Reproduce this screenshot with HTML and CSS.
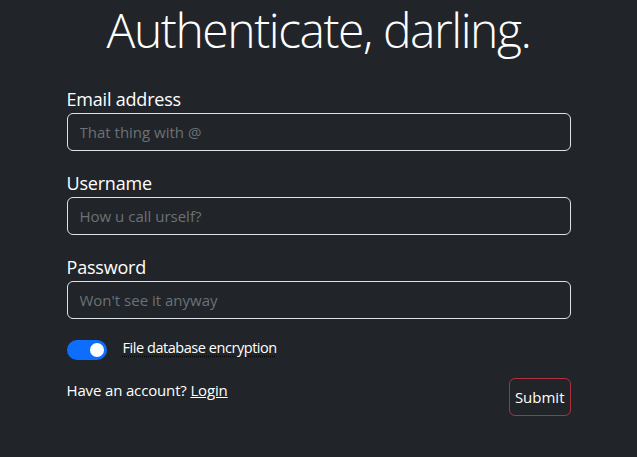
FILE: index.html
```html
<!DOCTYPE html>
<html lang="en">
<head>
<meta charset="utf-8">
<title>Authenticate</title>
<link rel="stylesheet" href="styles.css">
</head>
<body>
<main class="container">
  <h1 class="title">Authenticate, darling.</h1>
  <form class="form">
    <div class="group">
      <label class="label" for="email">Email address</label>
      <input class="input" id="email" type="email" placeholder="That thing with @">
    </div>
    <div class="group">
      <label class="label" for="user">Username</label>
      <input class="input" id="user" type="text" placeholder="How u call urself?">
    </div>
    <div class="group">
      <label class="label" for="pass">Password</label>
      <input class="input" id="pass" type="password" placeholder="Won't see it anyway">
    </div>
    <div class="switch-row">
      <span class="switch"><span class="knob"></span></span>
      <span class="switch-label">File database encryption</span>
    </div>
    <div class="bottom-row">
      <p class="account">Have an account? <a class="login" href="#">Login</a></p>
      <button class="submit" type="button">Submit</button>
    </div>
  </form>
</main>
</body>
</html>
```
FILE: styles.css
```css
html, body {
  margin: 0;
  padding: 0;
  background: #212529;
  color: #ffffff;
  font-family: "Open Sans", "Noto Sans", sans-serif;
  font-size: 15px;
}

.container {
  width: 504px;
  margin: 0 auto;
}

.title {
  margin: 0 0 23px;
  font-size: 48px;
  font-weight: 300;
  line-height: 60px;
  letter-spacing: -1.45px;
  text-align: center;
}

.form {
  display: flex;
  flex-direction: column;
}

.group {
  display: flex;
  flex-direction: column;
  margin-bottom: 16px;
}

.label {
  font-size: 18px;
  line-height: 30px;
  letter-spacing: -0.2px;
  padding-top: 1px;
  margin-bottom: -1px;
}

.input {
  box-sizing: border-box;
  height: 38px;
  width: 100%;
  padding: 6px 12px;
  border: 1px solid #dee2e6;
  border-radius: 6px;
  background: #212529;
  color: #fff;
  font-family: inherit;
  font-size: 15px;
  outline: none;
}

.input::placeholder {
  color: #6c7176;
}

.switch-row {
  display: flex;
  align-items: flex-start;
  gap: 16px;
  margin-top: 5px;
  height: 20px;
}

.switch {
  position: relative;
  width: 40px;
  height: 20px;
  border-radius: 10px;
  background: #0d6efd;
  flex: none;
}

.knob {
  position: absolute;
  right: 3px;
  top: 3px;
  width: 14px;
  height: 14px;
  border-radius: 50%;
  background: #fff;
}

.switch-label {
  font-size: 14.5px;
  line-height: 20px;
  letter-spacing: -0.45px;
  margin-top: -2px;
  text-decoration: underline dotted rgba(0, 0, 0, 0.75);
  text-underline-offset: 3px;
}

.bottom-row {
  display: flex;
  justify-content: space-between;
  align-items: flex-start;
  margin-top: 18px;
}

.account {
  margin: 0;
  font-size: 15px;
  line-height: 24px;
  letter-spacing: -0.15px;
}

.login {
  color: #fff;
  text-decoration: underline;
}

.submit {
  box-sizing: border-box;
  height: 38px;
  padding: 6px 5px;
  border: 1px solid #b0303f;
  border-radius: 6px;
  background: transparent;
  color: #fff;
  font-family: inherit;
  font-size: 15px;
  line-height: 24px;
}
```
